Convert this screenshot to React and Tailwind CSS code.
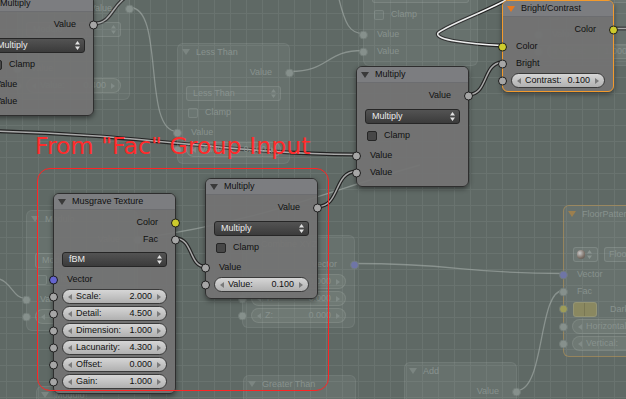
import React from "react";

const SOCKET = {
  gray: "bg-[#a6a6a6]",
  yellow: "bg-[#cdcc2c]",
  blue: "bg-[#6565cf]",
  dimGray: "bg-[#86908c]",
  dimYellow: "bg-[#9d9c58]",
  dimBlue: "bg-[#6f75a6]",
};

function Socket({ side, tone = "gray", dim }) {
  const key = dim ? `dim${tone[0].toUpperCase()}${tone.slice(1)}` : tone;
  return (
    <span
      className={`absolute top-1/2 h-[9px] w-[9px] -translate-y-1/2 rounded-full ${
        side === "left" ? "left-[-5px]" : "right-[-5px]"
      } ${dim ? "border border-[#727c78]" : "border border-[#1c1c1c]"} ${SOCKET[key]}`}
    />
  );
}

const Tri = ({ color }) => (
  <svg width="8" height="6" className="shrink-0">
    <path d="M0 0 L8 0 L4 6 Z" fill={color} />
  </svg>
);

function Node({ pos, title, dim, selected, triColor, children, bodyClass = "pt-[4px]", frameClass }) {
  const frame =
    frameClass ??
    (dim
      ? "border border-[rgba(180,190,185,0.12)] bg-[rgba(165,175,170,0.12)] text-[#88928e]"
      : selected
      ? "border border-[#f39a2c] bg-[rgba(115,115,115,0.96)] text-[#101010] shadow-[0_2px_5px_rgba(0,0,0,0.45)]"
      : "border border-[#2e2e2e] bg-[rgba(115,115,115,0.93)] text-[#101010] shadow-[0_2px_5px_rgba(0,0,0,0.45)]");
  return (
    <div className={`absolute rounded-[6px] ${frame} ${pos}`}>
      <div
        className={`flex h-[16px] items-center rounded-t-[5px] pl-[4px] ${
          dim ? "" : "border-b border-[rgba(0,0,0,0.12)] bg-[#7c7d80]"
        }`}
      >
        <Tri color={triColor ?? (dim ? "#7b8581" : "#3a3a3a")} />
        <span className="ml-[6px] whitespace-nowrap">{title}</span>
      </div>
      <div className={bodyClass}>{children}</div>
    </div>
  );
}

const Out = ({ label, tone, dim }) => (
  <div className="relative flex h-[17px] items-center justify-end pr-[17px]">
    <span className="whitespace-nowrap">{label}</span>
    <Socket side="right" tone={tone} dim={dim} />
  </div>
);

const In = ({ label, tone, dim }) => (
  <div className="relative flex h-[17px] items-center pl-[13px]">
    <span className="whitespace-nowrap">{label}</span>
    <Socket side="left" tone={tone} dim={dim} />
  </div>
);

const Arrow = ({ dir, color }) => (
  <svg width="4" height="6" className={`absolute top-1/2 -translate-y-1/2 ${dir === "l" ? "left-[5px]" : "right-[5px]"}`}>
    <path d={dir === "l" ? "M4 0 L0 3 L4 6 Z" : "M0 0 L4 3 L0 6 Z"} fill={color} />
  </svg>
);

function Field({ label, value, dim, socket }) {
  return (
    <div className="relative flex h-[17px] items-center px-[8px]">
      {socket && <Socket side="left" tone="gray" dim={dim} />}
      <div
        className={`relative flex h-[15px] w-full items-center rounded-full pl-[13px] pr-[14px] ${
          dim
            ? "border border-[rgba(190,200,195,0.16)] bg-[rgba(170,180,175,0.12)]"
            : "border border-[#3a3a3a] bg-[linear-gradient(to_bottom,#d6d6d6,#b0b0b0)] text-[#111]"
        }`}
      >
        <Arrow dir="l" color={dim ? "#818b87" : "#7a7a7a"} />
        <span className="whitespace-nowrap">{label}</span>
        <span className="ml-auto">{value}</span>
        <Arrow dir="r" color={dim ? "#818b87" : "#7a7a7a"} />
      </div>
    </div>
  );
}

const UpDown = ({ color }) => (
  <svg width="5" height="9" className="ml-auto shrink-0">
    <path d="M2.5 0 L5 3.5 L0 3.5 Z M2.5 9 L5 5.5 L0 5.5 Z" fill={color} />
  </svg>
);

function Dropdown({ label, dim, className = "mt-[4px]" }) {
  return (
    <div className={`flex h-[17px] items-center px-[8px] ${className}`}>
      <div
        className={`flex h-[15px] w-full items-center rounded-[3px] pl-[6px] pr-[4px] ${
          dim
            ? "border border-[rgba(190,200,195,0.16)] bg-[rgba(170,180,175,0.1)]"
            : "border border-[#262626] bg-[linear-gradient(to_bottom,#535353,#3b3b3b)] text-[#ececec]"
        }`}
      >
        <span className="whitespace-nowrap">{label}</span>
        <UpDown color={dim ? "#828c88" : "#e2e2e2"} />
      </div>
    </div>
  );
}

const Clamp = ({ dim }) => (
  <div className="mt-[2px] flex h-[17px] items-center pl-[10px]">
    <span
      className={`h-[10px] w-[10px] rounded-[2px] ${
        dim ? "border border-[rgba(190,200,195,0.18)] bg-[rgba(170,180,175,0.08)]" : "border border-[#262626] bg-[#474747]"
      }`}
    />
    <span className="ml-[7px]">Clamp</span>
  </div>
);

function MathNode({ pos, title, op, dim, field }) {
  return (
    <Node pos={pos} title={title} dim={dim} bodyClass="pt-[4px] pb-[5px]">
      <Out label="Value" dim={dim} />
      <Dropdown label={op} dim={dim} />
      <Clamp dim={dim} />
      <div className="mt-[3px]">
        <In label="Value" dim={dim} />
        {field ? <Field label="Value:" value={field} dim={dim} socket /> : <In label="Value" dim={dim} />}
      </div>
    </Node>
  );
}

function Link({ d, tone }) {
  if (tone === "dim") {
    return <path d={d} fill="none" stroke="#b4bcb8" strokeOpacity="0.5" strokeWidth="1.3" />;
  }
  return (
    <g>
      <path d={d} fill="none" stroke="#232323" strokeWidth="3.8" />
      <path d={d} fill="none" stroke={tone === "white" ? "#f6f6f6" : "#a9a9a9"} strokeWidth="1.5" />
    </g>
  );
}

export default function App() {
  return (
    <div className="relative h-[399px] w-[626px] overflow-hidden bg-[#5f6965] bg-[linear-gradient(to_right,#69736f_1px,transparent_1px),linear-gradient(to_bottom,#69736f_1px,transparent_1px)] bg-[size:16px_16px] bg-[position:6px_13px] font-['Liberation_Sans',Arial,sans-serif] text-[9px] leading-none">
      <svg className="absolute left-0 top-0" width="626" height="399">
        <Link tone="dim" d="M130 7.5 C165 7.5 142 131.5 177 131.5" />
        <Link tone="dim" d="M338 -5 C345 25 350 33.5 363 33.5" />
        <Link tone="dim" d="M290 71.5 C330 71.5 325 50.5 363 50.5" />
        <Link tone="dim" d="M355 263.5 C460 263.5 460 273.5 563 273.5" />
        <Link tone="dim" d="M517 390.5 C545 390.5 538 290.5 563 290.5" />
        <Link tone="dim" d="M-5 278 C12 280 12 298.5 26 298.5" />
        <Link tone="dim" d="M138 238.5 C260 222 330 190 420 165" />
        <Link d="M94 23.5 C112 23.5 112 4 128 -4" />
        <Link d="M-10 131 C140 134 230 154 356 154.5" />
        <Link d="M318 206.5 C340 206.5 334 171.5 356 171.5" />
        <Link d="M176 238.5 C193 238.5 189 266.5 205 266.5" />
        <Link d="M469 94.5 C488 94.5 483 62.5 502 62.5" />
        <Link d="M614 28.5 L640 28.5" />
        <Link tone="white" d="M506 0 C480 14 445 26 438 33 C434 40 470 44 502 45.5" />
      </svg>

      {/* background (inactive) nodes */}
      <MathNode pos="left-[17px] top-[-21px] w-[113px]" title="Modulo" op="Modulo" dim field="0.400" />
      <MathNode pos="left-[177px] top-[43px] w-[113px]" title="Less Than" op="Less Than" dim field="0.100" />
      <MathNode pos="left-[363px] top-[-55px] w-[115px]" title="Multiply" op="Multiply" dim />
      <MathNode pos="left-[538px] top-[-55px] w-[113px]" title="Multiply" op="Multiply" dim field="1.000" />
      <MathNode pos="left-[26px] top-[210px] w-[112px]" title="Modulo" op="Modulo" dim field="1.000" />
      <Node pos="left-[36px] top-[386px] w-[113px] h-[40px]" title="Modulo" dim />
      <Node pos="left-[242px] top-[235px] w-[113px]" title="Combine XYZ" dim bodyClass="pt-[4px] pb-[3px]">
        <Out label="Vector" tone="blue" dim />
        <Field label="X:" value="0.000" dim socket />
        <Field label="Y:" value="0.000" dim socket />
        <Field label="Z:" value="0.000" dim socket />
      </Node>
      <Node pos="left-[404px] top-[362px] w-[113px] h-[60px]" title="Add" dim>
        <Out label="Value" dim />
      </Node>
      <Node pos="left-[243px] top-[375px] w-[113px] h-[50px]" title="Greater Than" dim />
      <Node
        pos="left-[563px] top-[205px] w-[120px]"
        title="FloorPattern"
        dim
        triColor="#9c7f4e"
        frameClass="border border-[rgba(190,150,80,0.55)] bg-[rgba(165,175,170,0.12)] text-[#88928e]"
        bodyClass="pb-[4px]"
      >
        <div className="mt-[24px] flex h-[17px] items-center gap-[6px] pl-[9px]">
          <div className="flex h-[15px] w-[25px] items-center gap-[2px] rounded-[3px] border border-[rgba(190,200,195,0.2)] bg-[rgba(170,180,175,0.1)] pl-[3px]">
            <span className="h-[9px] w-[9px] rounded-full bg-[radial-gradient(circle_at_35%_35%,#c8c8c8,#7b6f66_60%,#4c4a48)]" />
            <UpDown color="#8a9490" />
            <span className="w-[3px]" />
          </div>
          <div className="flex h-[15px] flex-1 items-center rounded-l-[3px] border border-[rgba(190,200,195,0.2)] bg-[rgba(170,180,175,0.1)] pl-[4px]">
            FloorPattern
          </div>
        </div>
        <div className="mt-[3px]">
          <In label="Vector" tone="blue" dim />
          <In label="Fac" dim />
          <div className="relative flex h-[18px] items-center pl-[9px]">
            <Socket side="left" tone="yellow" dim />
            <div className="flex h-[15px] w-[24px] rounded-[3px] border border-[rgba(190,200,195,0.2)] bg-[#8a8860]">
              <span className="h-full w-1/2 border-r border-[rgba(0,0,0,0.12)]" />
            </div>
            <span className="ml-[13px]">Dark</span>
          </div>
          <Field label="Horizontal" value="" dim socket />
          <Field label="Vertical:" value="" dim socket />
        </div>
      </Node>

      {/* active nodes */}
      <MathNode pos="left-[-19px] top-[-5px] w-[113px]" title="Multiply" op="Multiply" />
      <MathNode pos="left-[356px] top-[66px] w-[113px]" title="Multiply" op="Multiply" />
      <MathNode pos="left-[205px] top-[178px] w-[113px]" title="Multiply" op="Multiply" field="0.100" />

      <Node pos="left-[502px] top-[0px] w-[112px]" title="Bright/Contrast" selected triColor="#e8781e" bodyClass="pt-[4px] pb-[2px]">
        <Out label="Color" tone="yellow" />
        <In label="Color" tone="yellow" />
        <In label="Bright" />
        <Field label="Contrast:" value="0.100" socket />
      </Node>

      <Node pos="left-[53px] top-[193px] w-[123px]" title="Musgrave Texture" bodyClass="pt-[4px] pb-[3px]">
        <Out label="Color" tone="yellow" />
        <Out label="Fac" />
        <Dropdown label="fBM" className="mt-[3px]" />
        <div className="mt-[3px]">
          <In label="Vector" tone="blue" />
          <Field label="Scale:" value="2.000" socket />
          <Field label="Detail:" value="4.500" socket />
          <Field label="Dimension:" value="1.000" socket />
          <Field label="Lacunarity:" value="4.300" socket />
          <Field label="Offset:" value="0.000" socket />
          <Field label="Gain:" value="1.000" socket />
        </div>
      </Node>

      {/* annotation */}
      <div className="pointer-events-none absolute left-[35px] top-[134px] whitespace-nowrap font-['DejaVu_Sans',sans-serif] text-[23.7px] leading-[24px] text-[#ff2b2b]">
        From &quot;Fac&quot; Group Input
      </div>
      <div className="pointer-events-none absolute left-[37px] top-[168px] h-[223px] w-[292px] rounded-[13px] border border-[#ff2424]" />
    </div>
  );
}
